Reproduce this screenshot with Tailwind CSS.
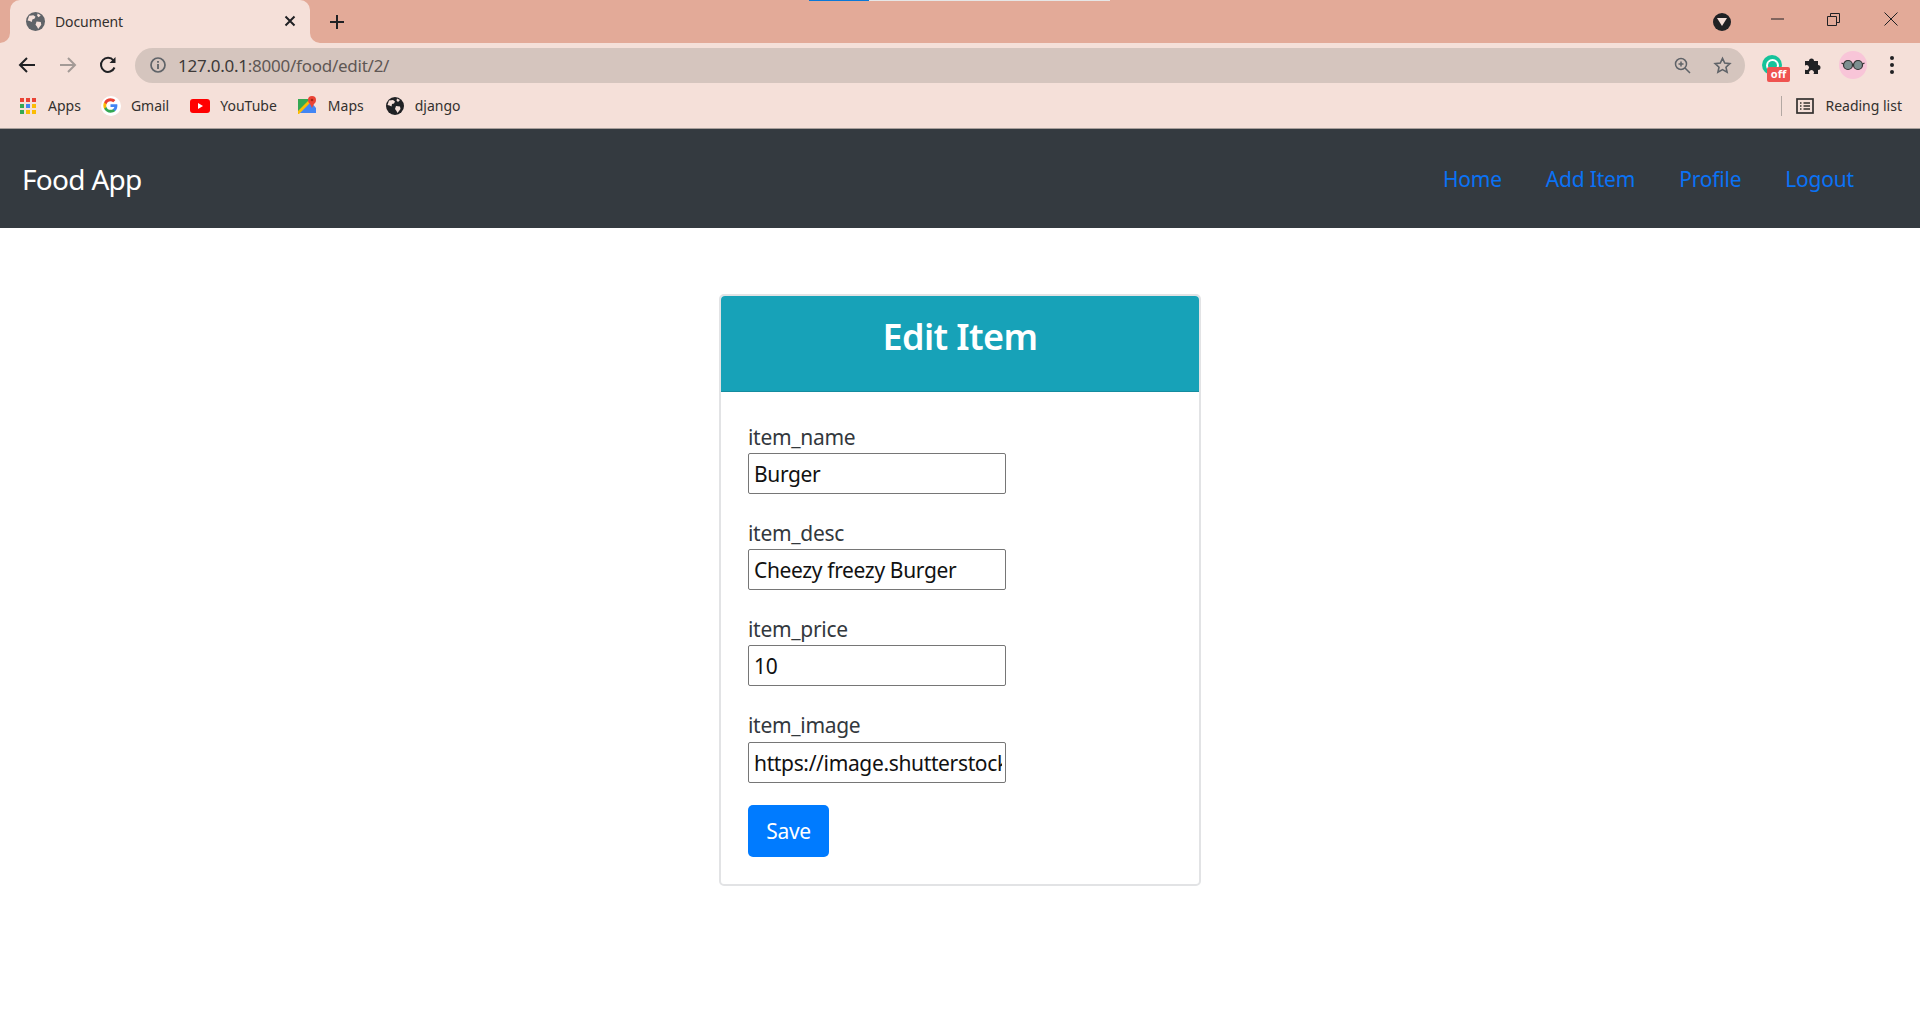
<!doctype html>
<html>

<head>
    <meta charset="UTF-8">
    <meta name="viewport" content="width=device-width, initial-scale=1.0">
    <title>Document</title>
    <script src="https://cdn.jsdelivr.net/npm/@tailwindcss/browser@4"></script>
</head>

<body class="bg-white font-['Noto_Sans','Open_Sans',sans-serif] overflow-hidden">
    <!-- browser chrome: tabs -->
    <div class="relative h-[43px] bg-[#e3aa98] flex items-end">
        <div class="absolute top-0 left-[809px] w-[60px] h-px bg-[#0a78d7]"></div>
        <div class="absolute top-0 left-[869px] w-[241px] h-px bg-[#e6e6e6]"></div>

        <div class="relative ml-[10px] w-[300px] h-[43px] bg-[#f5e0d9] rounded-t-[10px] flex items-center pl-[16px] pr-[14px] pb-[1px]">
            <svg class="absolute left-[-10px] bottom-0" width="10" height="10" viewBox="0 0 10 10"><path d="M0 10A10 10 0 0 0 10 0V10Z" fill="#f5e0d9"/></svg>
            <svg class="absolute right-[-10px] bottom-0" width="10" height="10" viewBox="0 0 10 10"><path d="M10 10A10 10 0 0 1 0 0V10Z" fill="#f5e0d9"/></svg>
            <svg width="19" height="19" viewBox="0 0 18 18"><circle cx="9" cy="9" r="9" fill="#5f6368"/><path d="M3 3.500 7 3l2 1.500-1 2-2 .5-.5 2.500L3.500 8.500 1.500 8ZM10 9l4 .5.500 2.500-3 4-1-2-1.500-2ZM11 1.500l3 1.500-2 2-1.500-1.500Z" fill="#f5e0d9"/></svg>
            <span class="ml-[10px] text-[14px] tracking-[-0.1px] text-[#33302e]">Document</span>
            <svg class="ml-auto" width="12" height="12" viewBox="0 0 12 12"><path d="M1.500 1.500l9 9M10.500 1.500l-9 9" stroke="#202124" stroke-width="2"/></svg>
        </div>
        <svg class="ml-[19px] mb-[13px]" width="16" height="16" viewBox="0 0 16 16"><path d="M8 1v14M1 8h14" stroke="#202124" stroke-width="2"/></svg>

        <div class="ml-auto flex items-center h-[43px] self-start">
            <div class="w-[18px] h-[18px] rounded-full bg-[#202124] flex items-center justify-center mr-[40px]">
                <svg width="10" height="8" viewBox="0 0 10 8"><path d="M0 0h10L5 8Z" fill="#f5e0d9"/></svg>
            </div>
            <svg class="mr-[43px] -mt-[5px]" width="13" height="2" viewBox="0 0 13 2"><path d="M0 1h13" stroke="#202124"/></svg>
            <svg class="mr-[44px] -mt-[5px]" width="13" height="13" viewBox="0 0 13 13" fill="none" stroke="#202124"><path d="M.5 3.500h9v9h-9zM3.500 3.500v-3h9v9h-3"/></svg>
            <svg class="mr-[22px] -mt-[5px]" width="14" height="14" viewBox="0 0 14 14"><path d="M.5.500l13 13M13.500.500l-13 13" stroke="#202124"/></svg>
        </div>
    </div>

    <!-- browser chrome: toolbar -->
    <div class="h-[44px] bg-[#f5e0d9] flex items-center pl-[18px] pr-[13px]">
        <svg width="18" height="18" viewBox="0 0 18 18" fill="none" stroke="#202124" stroke-width="2"><path d="M17 9H2M9 2 2 9l7 7"/></svg>
        <svg class="ml-[23px]" width="18" height="18" viewBox="0 0 18 18" fill="none" stroke="#a39a96" stroke-width="2"><path d="M1 9h15M9 2l7 7-7 7"/></svg>
        <svg class="ml-[22px]" width="18" height="18" viewBox="0 0 18 18" fill="none" stroke="#202124" stroke-width="2"><path d="M15.500 11.500A7 7 0 1 1 14.500 4.500"/><path d="M16.500 1v6h-6z" fill="#202124" stroke="none"/></svg>

        <div class="ml-[18px] w-[1610px] h-[35px] rounded-full bg-[#d5c5be] flex items-center pl-[15px] pr-[13px]">
            <svg width="16" height="16" viewBox="0 0 16 16" fill="none"><circle cx="8" cy="8" r="7" stroke="#5f6368" stroke-width="1.700"/><path d="M8 7v5M8 4v1.800" stroke="#5f6368" stroke-width="1.800"/></svg>
            <span class="ml-[12px] pt-px text-[17px] tracking-[-0.25px] text-[#3d3938]">127.0.0.1<span class="text-[#5f5754]">:8000/food/edit/2/</span></span>
            <svg class="ml-auto" width="17" height="17" viewBox="0 0 17 17" fill="none" stroke="#5f6368" stroke-width="1.500"><circle cx="7" cy="7" r="5.500"/><path d="M11 11l5 5M4.500 7h5M7 4.500v5"/></svg>
            <svg class="ml-[22px]" width="19" height="19" viewBox="0 0 24 24" fill="none" stroke="#5f6368" stroke-width="2"><path d="M12 3l2.800 6 6.500.7-4.900 4.400 1.400 6.400L12 17.200 6.200 20.500l1.400-6.400L2.700 9.700 9.200 9Z"/></svg>
        </div>

        <div class="relative ml-[17px] w-[20px] h-[20px] rounded-full bg-[#15c39a] flex items-center justify-center">
            <div class="w-[13px] h-[13px] rounded-full border-2 border-white border-b-transparent"></div>
            <div class="absolute left-[5px] top-[12px] w-[23px] h-[15px] rounded-[2px] bg-[#ef5350] text-white text-[11px] leading-[14px] font-bold text-center">off</div>
        </div>
        <svg class="ml-[22px]" width="19" height="19" viewBox="0 0 19 19"><path d="M1 5h4a2.500 2.500 0 1 1 5 0h4v4a2.500 2.500 0 1 1 0 5v4h-4.500a2.500 2.500 0 1 0-4 0H1v-4.500a2.500 2.500 0 1 0 0-4Z" fill="#202124"/></svg>
        <div class="ml-[16px] w-[28px] h-[28px] rounded-full bg-[#f8c5d8] flex items-center justify-center">
            <svg width="24" height="12" viewBox="0 0 24 12"><circle cx="7" cy="6" r="4.500" fill="#7d8f90" stroke="#333" stroke-width="1.200"/><circle cx="17" cy="6" r="4.500" fill="#7d8f90" stroke="#333" stroke-width="1.200"/><path d="M11 5.500h2M2.500 5 .5 4M21.500 5l2-1" stroke="#333" stroke-width="1.200"/></svg>
        </div>
        <div class="ml-[23px] flex flex-col gap-[3px]">
            <div class="w-[4px] h-[4px] rounded-full bg-[#202124]"></div>
            <div class="w-[4px] h-[4px] rounded-full bg-[#202124]"></div>
            <div class="w-[4px] h-[4px] rounded-full bg-[#202124]"></div>
        </div>
    </div>

    <!-- browser chrome: bookmarks -->
    <div class="h-[42px] bg-[#f5e0d9] border-b border-[#a89f9b] flex items-center pl-[20px] pr-[19px] pb-[4px] text-[14px] text-[#33302e]">
        <div class="grid grid-cols-3 gap-[2px] w-[16px]">
            <i class="h-[4px] bg-[#ea4335]"></i><i class="h-[4px] bg-[#ea4335]"></i><i class="h-[4px] bg-[#ea4335]"></i>
            <i class="h-[4px] bg-[#34a853]"></i><i class="h-[4px] bg-[#4285f4]"></i><i class="h-[4px] bg-[#fbbc04]"></i>
            <i class="h-[4px] bg-[#34a853]"></i><i class="h-[4px] bg-[#fbbc04]"></i><i class="h-[4px] bg-[#fbbc04]"></i>
        </div>
        <span class="ml-[12px]">Apps</span>

        <div class="ml-[20px] w-[20px] h-[20px] rounded-full bg-white flex items-center justify-center">
            <svg width="15" height="15" viewBox="0 0 48 48"><path fill="#4285F4" d="M46 24.500c0-1.600-.100-3.100-.400-4.500H24v8.500h12.400c-.500 2.900-2.100 5.300-4.600 7v5.800h7.400C43.500 37.800 46 31.700 46 24.500z"/><path fill="#34A853" d="M24 47c6.200 0 11.400-2 15.200-5.500l-7.400-5.800c-2 1.400-4.700 2.200-7.800 2.200-6 0-11.100-4-12.900-9.500H3.500v6C7.300 41.800 15 47 24 47z"/><path fill="#FBBC05" d="M11.100 28.400c-.500-1.400-.700-2.900-.700-4.400s.300-3 .700-4.400v-6H3.500C2 16.600 1 20.200 1 24s.900 7.400 2.500 10.400z"/><path fill="#EA4335" d="M24 10.100c3.400 0 6.400 1.200 8.800 3.400l6.600-6.600C35.400 3.200 30.200 1 24 1 15 1 7.300 6.200 3.500 13.600l7.600 6C12.900 14.100 18 10.100 24 10.100z"/></svg>
        </div>
        <span class="ml-[10px]">Gmail</span>

        <svg class="ml-[21px]" width="20" height="14" viewBox="0 0 20 14"><rect width="20" height="14" rx="3" fill="#f00"/><path d="M8 4l5 3-5 3Z" fill="#fff"/></svg>
        <span class="ml-[10px]">YouTube</span>

        <svg class="ml-[21px]" width="19" height="19" viewBox="0 0 19 19"><path d="M0 3h12v14H0Z" fill="#34a853"/><path d="M0 17 12 5l6 7v5Z" fill="#4285f4"/><path d="M0 15 11 4l2 2L1 18H0Z" fill="#fbbc04"/><circle cx="14" cy="4" r="4" fill="#ea4335"/><path d="M11 6l3 6 3-6Z" fill="#ea4335"/><circle cx="14" cy="4" r="1.300" fill="#a52714"/></svg>
        <span class="ml-[11px]">Maps</span>

        <svg class="ml-[22px]" width="18" height="18" viewBox="0 0 18 18"><circle cx="9" cy="9" r="9" fill="#202124"/><path d="M3 3.500 7 3l2 1.500-1 2-2 .5-.5 2.500L3.500 8.500 1.500 8ZM10 9l4 .5.500 2.500-3 4-1-2-1.500-2ZM11 1.500l3 1.500-2 2-1.500-1.500Z" fill="#f5e0d9"/></svg>
        <span class="ml-[11px]">django</span>

        <div class="ml-auto w-px h-[20px] bg-[#b3a8a3]"></div>
        <svg class="ml-[14px]" width="18" height="18" viewBox="0 0 18 18" fill="none" stroke="#33302e" stroke-width="1.700"><rect x="1" y="2" width="16" height="14"/><path d="M4 6h1.500M7.500 6H14M4 9h1.500M7.500 9H14M4 12h1.500M7.500 12H14"/></svg>
        <span class="ml-[11px] mr-[-1px]">Reading list</span>
    </div>

    <!-- navbar -->
    <nav class="h-[99px] bg-[#343a40] flex items-center justify-between pl-[22px] pr-[66px]">
        <a class="text-[28px] text-white tracking-[-0.7px]">Food App</a>
        <ul class="flex gap-[44px] pt-[2px] text-[21px] tracking-[-0.2px] text-[#0a72f5]">
            <li>Home</li>
            <li>Add Item</li>
            <li>Profile</li>
            <li>Logout</li>
        </ul>
    </nav>

    <!-- edit card -->
    <main class="pt-[66px] flex justify-center">
        <div class="w-[482px] h-[592px] border-2 border-[#e2e3e5] rounded-[5px]">
            <div class="h-[96px] bg-[#17a2b8] border-b border-[#148c9f] rounded-t-[4px] pt-[16px] text-center">
                <h1 class="text-[36px] leading-[50px] font-semibold tracking-[-0.6px] text-white">Edit Item</h1>
            </div>
            <form class="pt-[27px] pl-[27px] flex flex-col gap-[21px] text-[21px] tracking-[-0.3px] text-[#33383d]">
                <div>
                    <label class="block h-[34px] leading-[36px]">item_name</label>
                    <input class="block w-[258px] h-[41px] border border-[#767676] rounded-[2px] pl-[5px] pr-[3px] tracking-[-0.35px] text-[#111] outline-none" value="Burger">
                </div>
                <div>
                    <label class="block h-[34px] leading-[36px]">item_desc</label>
                    <input class="block w-[258px] h-[41px] border border-[#767676] rounded-[2px] pl-[5px] pr-[3px] tracking-[-0.35px] text-[#111] outline-none" value="Cheezy freezy Burger">
                </div>
                <div>
                    <label class="block h-[34px] leading-[36px]">item_price</label>
                    <input class="block w-[258px] h-[41px] border border-[#767676] rounded-[2px] pl-[5px] pr-[3px] tracking-[-0.35px] text-[#111] outline-none" value="10">
                </div>
                <div>
                    <label class="block h-[35px] leading-[37px]">item_image</label>
                    <input class="block w-[258px] h-[41px] border border-[#767676] rounded-[2px] pl-[5px] pr-[3px] tracking-[-0.35px] text-[#111] outline-none" value="https://image.shutterstock.com/image-photo/burger.jpg">
                </div>
                <button class="mt-px pt-px w-[81px] h-[52px] bg-[#007bff] rounded-[5px] text-white">Save</button>
            </form>
        </div>
    </main>
</body>

</html>
